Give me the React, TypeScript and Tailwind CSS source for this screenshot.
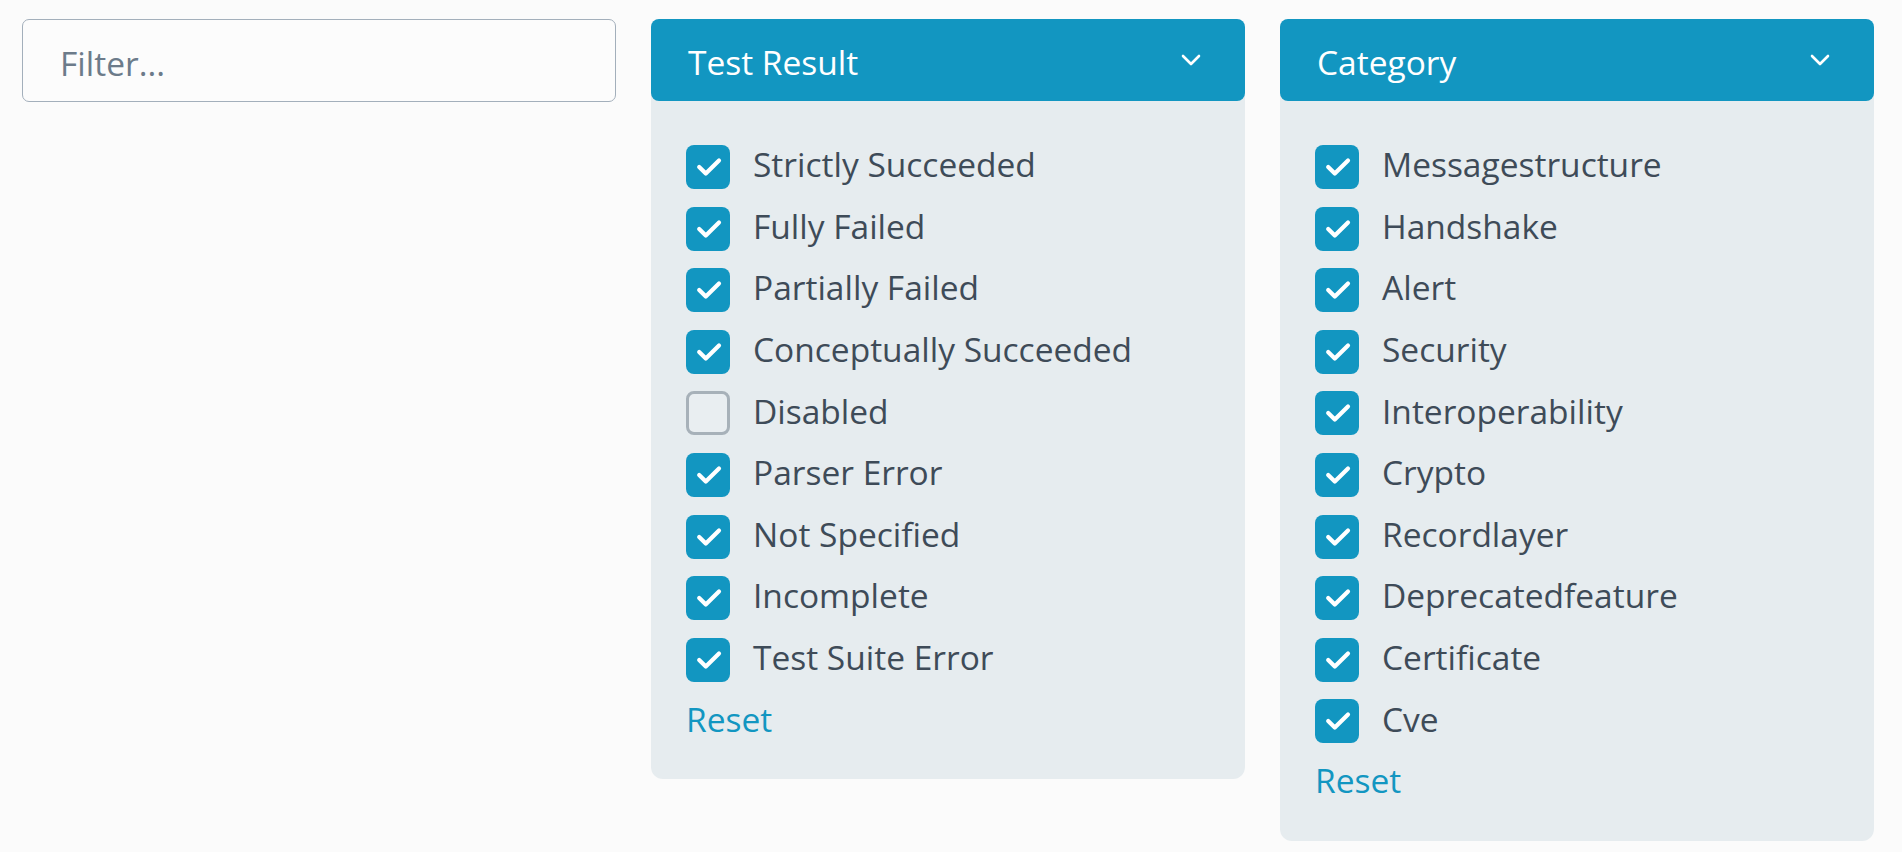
const testResults: { label: string; checked: boolean }[] = [
  { label: "Strictly Succeeded", checked: true },
  { label: "Fully Failed", checked: true },
  { label: "Partially Failed", checked: true },
  { label: "Conceptually Succeeded", checked: true },
  { label: "Disabled", checked: false },
  { label: "Parser Error", checked: true },
  { label: "Not Specified", checked: true },
  { label: "Incomplete", checked: true },
  { label: "Test Suite Error", checked: true },
];

const categories: { label: string; checked: boolean }[] = [
  { label: "Messagestructure", checked: true },
  { label: "Handshake", checked: true },
  { label: "Alert", checked: true },
  { label: "Security", checked: true },
  { label: "Interoperability", checked: true },
  { label: "Crypto", checked: true },
  { label: "Recordlayer", checked: true },
  { label: "Deprecatedfeature", checked: true },
  { label: "Certificate", checked: true },
  { label: "Cve", checked: true },
];

function Checkbox({ checked }: { checked: boolean }) {
  if (!checked) {
    return <span className="block h-[44px] w-[44px] shrink-0 rounded-[8px] border-[3px] border-[#a7b1b9] bg-[#e9eef1]" />;
  }
  return (
    <span className="flex h-[44px] w-[44px] shrink-0 items-center justify-center rounded-[8px] bg-[#1296c1]">
      <svg width="44" height="44" viewBox="0 0 20 20" fill="none">
        <path d="M6 10l3 3l6-6" stroke="#fff" strokeWidth="1.9" strokeLinecap="round" strokeLinejoin="round" />
      </svg>
    </span>
  );
}

function FilterPanel({ title, items }: { title: string; items: { label: string; checked: boolean }[] }) {
  return (
    <section className="w-[594px] shrink-0 rounded-[12px] bg-[#e6ecef]">
      <header className="flex h-[82px] items-center justify-between rounded-[8px] bg-[#1296c1] pl-[37px] pr-[44px] text-white">
        <span className="pt-[5px]">{title}</span>
        <svg width="20" height="12" viewBox="0 0 20 12" fill="none">
          <path d="M2 2l8 8l8-8" stroke="#fff" strokeWidth="2.6" strokeLinecap="round" strokeLinejoin="round" />
        </svg>
      </header>
      <div className="flex flex-col gap-[17.6px] pb-[36px] pl-[35px] pt-[44px]">
        {items.map((item) => (
          <label key={item.label} className="flex h-[44px] items-center gap-[23px] text-[#3e4b58]">
            <Checkbox checked={item.checked} />
            <span className="pb-[4px]">{item.label}</span>
          </label>
        ))}
        <a className="flex h-[44px] items-center pb-[4px] text-[#1296c1]">Reset</a>
      </div>
    </section>
  );
}

export default function App() {
  return (
    <div
      className="flex min-h-screen items-start gap-[35px] bg-[#fbfbfb] px-[22px] pt-[19px] text-[33.5px] leading-none"
      style={{ fontFamily: '"Open Sans", "Noto Sans", sans-serif' }}
    >
      <input
        className="h-[83px] w-[594px] shrink-0 rounded-[7px] border border-[#a3afbb] bg-[#fcfcfc] px-[37px] pt-[4px] text-[#3e4b58] outline-none placeholder:text-[#6c7b8a]"
        placeholder="Filter..."
      />
      <FilterPanel title="Test Result" items={testResults} />
      <FilterPanel title="Category" items={categories} />
    </div>
  );
}
